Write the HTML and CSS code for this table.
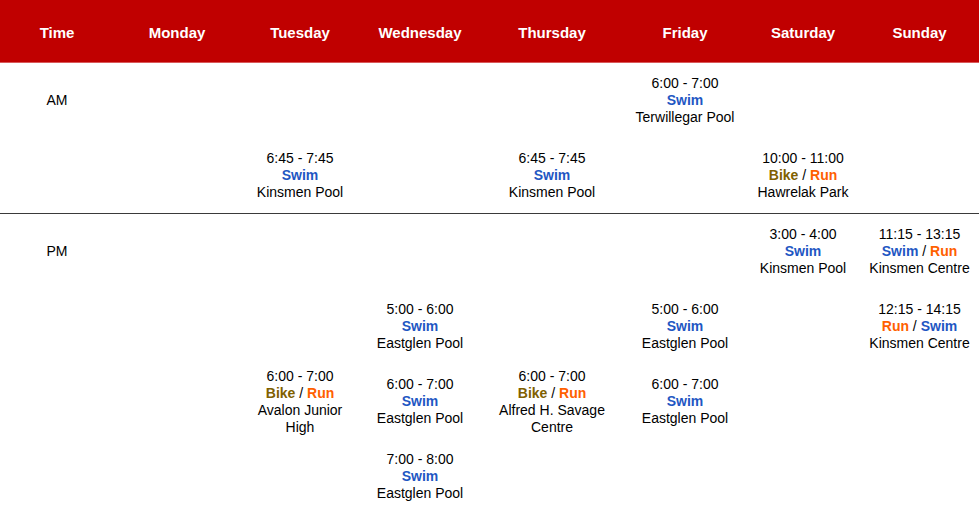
FILE: index.html
```html
<!DOCTYPE html>
<html>
<head>
<meta charset="utf-8">
<link rel="stylesheet" href="styles.css">
</head>
<body>
<table class="schedule">
  <colgroup>
    <col class="c-time"><col class="c-mon"><col class="c-tue"><col class="c-wed"><col class="c-thu"><col class="c-fri"><col class="c-sat"><col class="c-sun">
  </colgroup>
  <thead>
    <tr>
      <th>Time</th><th>Monday</th><th>Tuesday</th><th>Wednesday</th><th>Thursday</th><th>Friday</th><th>Saturday</th><th>Sunday</th>
    </tr>
  </thead>
  <tbody>
    <tr>
      <td>AM</td><td></td><td></td><td></td><td></td>
      <td>6:00 - 7:00<br><span class="swim">Swim</span><br>Terwillegar Pool</td>
      <td></td><td></td>
    </tr>
    <tr class="split">
      <td></td><td></td>
      <td>6:45 - 7:45<br><span class="swim">Swim</span><br>Kinsmen Pool</td>
      <td></td>
      <td>6:45 - 7:45<br><span class="swim">Swim</span><br>Kinsmen Pool</td>
      <td></td>
      <td>10:00 - 11:00<br><span class="bike">Bike</span> / <span class="run">Run</span><br>Hawrelak Park</td>
      <td></td>
    </tr>
    <tr>
      <td>PM</td><td></td><td></td><td></td><td></td><td></td>
      <td>3:00 - 4:00<br><span class="swim">Swim</span><br>Kinsmen Pool</td>
      <td>11:15 - 13:15<br><span class="swim">Swim</span> / <span class="run">Run</span><br>Kinsmen Centre</td>
    </tr>
    <tr>
      <td></td><td></td><td></td>
      <td>5:00 - 6:00<br><span class="swim">Swim</span><br>Eastglen Pool</td>
      <td></td>
      <td>5:00 - 6:00<br><span class="swim">Swim</span><br>Eastglen Pool</td>
      <td></td>
      <td>12:15 - 14:15<br><span class="run">Run</span> / <span class="swim">Swim</span><br>Kinsmen Centre</td>
    </tr>
    <tr>
      <td></td><td></td>
      <td>6:00 - 7:00<br><span class="bike">Bike</span> / <span class="run">Run</span><br>Avalon Junior<br>High</td>
      <td>6:00 - 7:00<br><span class="swim">Swim</span><br>Eastglen Pool</td>
      <td>6:00 - 7:00<br><span class="bike">Bike</span> / <span class="run">Run</span><br>Alfred H. Savage<br>Centre</td>
      <td>6:00 - 7:00<br><span class="swim">Swim</span><br>Eastglen Pool</td>
      <td></td><td></td>
    </tr>
    <tr>
      <td></td><td></td><td></td>
      <td>7:00 - 8:00<br><span class="swim">Swim</span><br>Eastglen Pool</td>
      <td></td><td></td><td></td><td></td>
    </tr>
  </tbody>
</table>
</body>
</html>
```
FILE: styles.css
```css
html, body {
  margin: 0;
  padding: 0;
  background: #ffffff;
}
body {
  font-family: "Liberation Sans", Arial, sans-serif;
  color: #000000;
}
.schedule {
  width: 979px;
  border-collapse: collapse;
  table-layout: fixed;
}
.c-time { width: 114px; }
.c-mon { width: 126px; }
.c-tue { width: 120px; }
.c-wed { width: 120px; }
.c-thu { width: 144px; }
.c-fri { width: 122px; }
.c-sat { width: 114px; }
.c-sun { width: 119px; }
.schedule th {
  background: #c00000;
  color: #ffffff;
  font-size: 15px;
  font-weight: bold;
  height: 60px;
  padding: 2px 0 0 0;
  text-align: center;
  vertical-align: middle;
  border-bottom: 1px solid #d9595a;
}
.schedule td {
  font-size: 14px;
  line-height: 17px;
  height: 75px;
  padding: 0;
  text-align: center;
  vertical-align: middle;
}
.schedule tr.split td {
  border-bottom: 1px solid #3a3a3a;
}
.swim {
  color: #1f57c3;
  font-weight: bold;
}
.bike {
  color: #7f6000;
  font-weight: bold;
}
.run {
  color: #ff6000;
  font-weight: bold;
}
```
